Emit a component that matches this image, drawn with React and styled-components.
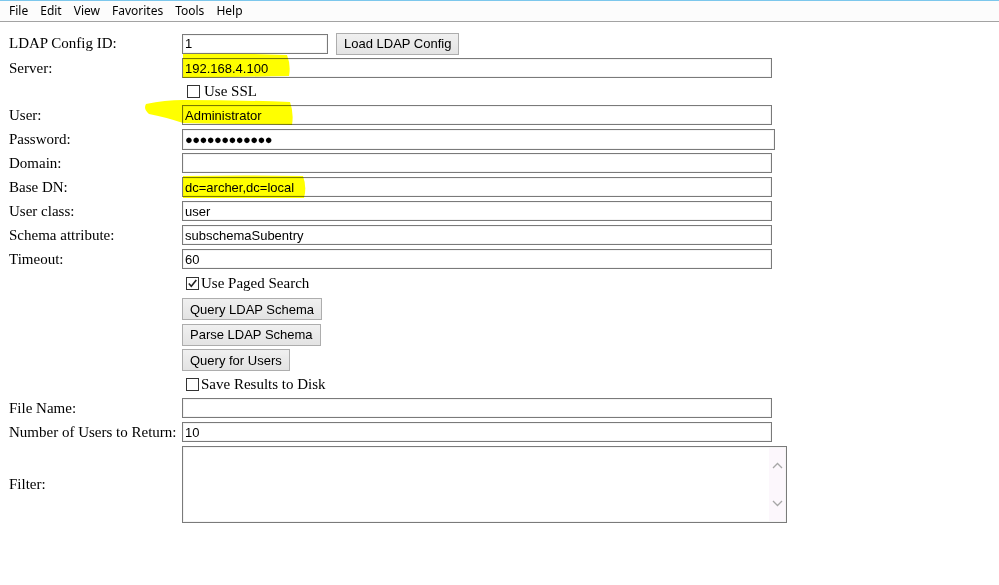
import React from "react";
import styled, { createGlobalStyle } from "styled-components";

const GlobalStyle = createGlobalStyle`
  html, body { margin: 0; padding: 0; background: #ffffff; }
  body { font-family: "Liberation Serif", "Times New Roman", serif; color: #000; }
  * { box-sizing: border-box; }
`;

const Page = styled.div`
  position: relative;
  width: 999px;
  height: 585px;
  overflow: hidden;
  background: #fff;
`;

const MenuBar = styled.div`
  display: flex;
  align-items: center;
  height: 22px;
  padding-left: 9px;
  gap: 12px;
  border-top: 1px solid #7cc7ec;
  border-bottom: 1px solid #a3a3a3;
  background: #fcfcfc;
  font-family: "Noto Sans", "Open Sans", sans-serif;
  font-size: 12px;
  color: #000;
`;

const MenuItem = styled.span`
  line-height: 20px;
`;

const Form = styled.div`
  display: flex;
  flex-direction: column;
  padding: 9px 0 0 9px;
`;

const Row = styled.div`
  display: grid;
  grid-template-columns: 173px auto;
  align-items: center;
  height: ${(p) => p.$h}px;
`;

const Label = styled.span`
  font-family: "Liberation Serif", "Times New Roman", serif;
  font-size: 15px;
  white-space: nowrap;
`;

const Cell = styled.div`
  display: flex;
  align-items: center;
  gap: 8px;
`;

const TextInput = styled.input`
  width: ${(p) => p.$w}px;
  height: ${(p) => p.$h || 20}px;
  margin: 0;
  padding: 0 2px;
  border: 1px solid #7a7a7a;
  box-shadow: inset 0 0 0 1px #f4f4f4;
  background: #fff;
  font-family: "Liberation Sans", Arial, sans-serif;
  font-size: 13px;
  color: #000;
  outline: none;
  letter-spacing: ${(p) => p.$ls || 0}px;
`;

const Button = styled.button`
  height: 22px;
  margin: 0;
  padding: 0 7px;
  border: 1px solid #adadad;
  border-radius: 0;
  background: linear-gradient(#f0f0f0, #e3e3e3);
  font-family: "Liberation Sans", Arial, sans-serif;
  font-size: 13px;
  color: #000;
  cursor: default;
`;

const CheckLine = styled.label`
  display: flex;
  align-items: center;
  gap: ${(p) => p.$gap}px;
  padding-left: ${(p) => p.$indent}px;
  font-family: "Liberation Serif", "Times New Roman", serif;
  font-size: 15px;
`;

const Box = styled.span`
  display: inline-flex;
  align-items: center;
  justify-content: center;
  width: 13px;
  height: 13px;
  border: 1px solid #333;
  background: #fff;
`;

const AreaFrame = styled.div`
  display: flex;
  width: 605px;
  height: 77px;
  border: 1px solid #7a7a7a;
  box-shadow: inset 0 0 0 1px #f4f4f4;
  background: #fff;
`;

const Area = styled.textarea`
  flex: 1;
  margin: 0;
  border: none;
  resize: none;
  outline: none;
  background: transparent;
  font-family: "Liberation Sans", Arial, sans-serif;
  font-size: 13px;
`;

const ScrollTrack = styled.div`
  width: 16px;
  margin: 1px 1px 1px 0;
  background: #fcf7fc;
  display: flex;
  flex-direction: column;
  align-items: center;
  justify-content: space-between;
  padding: 14px 0 14px;
`;

const Highlights = styled.svg`
  position: absolute;
  left: 0;
  top: 0;
  pointer-events: none;
  mix-blend-mode: multiply;
`;

const Check = () => (
  <svg width="11" height="11" viewBox="0 0 11 11">
    <path d="M1.8 5.5 L4.3 8.3 L9.3 2" fill="none" stroke="#222" strokeWidth="1.6" />
  </svg>
);

const Chevron = ({ up }) => (
  <svg width="11" height="7" viewBox="0 0 11 7">
    <path
      d={up ? "M1 6 L5.5 1.5 L10 6" : "M1 1 L5.5 5.5 L10 1"}
      fill="none"
      stroke="#a6a6a6"
      strokeWidth="1.3"
    />
  </svg>
);

export default function App() {
  return (
    <Page>
      <GlobalStyle />
      <MenuBar>
        <MenuItem>File</MenuItem>
        <MenuItem>Edit</MenuItem>
        <MenuItem>View</MenuItem>
        <MenuItem>Favorites</MenuItem>
        <MenuItem>Tools</MenuItem>
        <MenuItem>Help</MenuItem>
      </MenuBar>
      <Form>
        <Row $h={25}>
          <Label>LDAP Config ID:</Label>
          <Cell>
            <TextInput $w={146} defaultValue="1" />
            <Button>Load LDAP Config</Button>
          </Cell>
        </Row>
        <Row $h={24}>
          <Label>Server:</Label>
          <TextInput $w={590} defaultValue="192.168.4.100" />
        </Row>
        <Row $h={23}>
          <span />
          <CheckLine $gap={4} $indent={5}>
            <Box />
            Use SSL
          </CheckLine>
        </Row>
        <Row $h={24}>
          <Label>User:</Label>
          <TextInput $w={590} defaultValue="Administrator" />
        </Row>
        <Row $h={24}>
          <Label>Password:</Label>
          <TextInput $w={593} $h={21} $ls={-0.6} defaultValue="●●●●●●●●●●●●" />
        </Row>
        <Row $h={24}>
          <Label>Domain:</Label>
          <TextInput $w={590} defaultValue="" />
        </Row>
        <Row $h={24}>
          <Label>Base DN:</Label>
          <TextInput $w={590} defaultValue="dc=archer,dc=local" />
        </Row>
        <Row $h={24}>
          <Label>User class:</Label>
          <TextInput $w={590} defaultValue="user" />
        </Row>
        <Row $h={24}>
          <Label>Schema attribute:</Label>
          <TextInput $w={590} defaultValue="subschemaSubentry" />
        </Row>
        <Row $h={24}>
          <Label>Timeout:</Label>
          <TextInput $w={590} defaultValue="60" />
        </Row>
        <Row $h={25}>
          <span />
          <CheckLine $gap={2} $indent={4}>
            <Box>
              <Check />
            </Box>
            Use Paged Search
          </CheckLine>
        </Row>
        <Row $h={26}>
          <span />
          <Cell>
            <Button>Query LDAP Schema</Button>
          </Cell>
        </Row>
        <Row $h={25}>
          <span />
          <Cell>
            <Button>Parse LDAP Schema</Button>
          </Cell>
        </Row>
        <Row $h={26}>
          <span />
          <Cell>
            <Button>Query for Users</Button>
          </Cell>
        </Row>
        <Row $h={23}>
          <span />
          <CheckLine $gap={2} $indent={4}>
            <Box />
            Save Results to Disk
          </CheckLine>
        </Row>
        <Row $h={24}>
          <Label>File Name:</Label>
          <TextInput $w={590} defaultValue="" />
        </Row>
        <Row $h={24}>
          <Label>Number of Users to Return:</Label>
          <TextInput $w={590} defaultValue="10" />
        </Row>
        <Row $h={80}>
          <Label>Filter:</Label>
          <AreaFrame>
            <Area defaultValue="" />
            <ScrollTrack>
              <Chevron up />
              <Chevron />
            </ScrollTrack>
          </AreaFrame>
        </Row>
      </Form>
      <Highlights width="999" height="585" viewBox="0 0 999 585">
        <path
          d="M183 54 Q235 53 287 55 Q291 65 289 76 Q236 77 183 78 Z"
          fill="#ffff00"
        />
        <path
          d="M146 104 Q165 100 183 100 Q238 100 290 102 Q294 113 292 125 Q237 124 183 123 Q165 117 149 114 Q143 109 146 104 Z"
          fill="#ffff00"
        />
        <path
          d="M183 176 Q244 175 303 176 Q307 187 304 198 Q244 198 183 198 Z"
          fill="#ffff00"
        />
      </Highlights>
    </Page>
  );
}
